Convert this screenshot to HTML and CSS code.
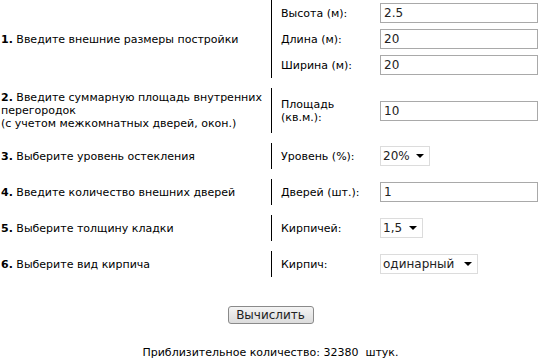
FILE: index.html
```html
<!DOCTYPE html>
<html>
	<head>
		<meta charset="utf-8">
		<title>Калькулятор кирпича</title>

		<link rel="stylesheet" href="styles.css">
	</head>
	<body>
		<form class="calc">
			<div class="step">
				<div class="step-title"><b>1.</b> Введите внешние размеры постройки</div>
				<div class="step-fields">
					<div class="field"><label>Высота (м):</label><input type="text" value="2.5"></div>
					<div class="field"><label>Длина (м):</label><input type="text" value="20"></div>
					<div class="field"><label>Ширина (м):</label><input type="text" value="20"></div>
				</div>
			</div>
			<div class="step">
				<div class="step-title"><b>2.</b> Введите суммарную площадь внутренних перегородок<br>(с учетом межкомнатных дверей, окон.)</div>
				<div class="step-fields">
					<div class="field"><label>Площадь (кв.м.):</label><input type="text" value="10"></div>
				</div>
			</div>
			<div class="step">
				<div class="step-title"><b>3.</b> Выберите уровень остекления</div>
				<div class="step-fields">
					<div class="field"><label>Уровень (%):</label>
						<span class="select"><select class="w-50"><option>20%</option></select></span>
					</div>
				</div>
			</div>
			<div class="step">
				<div class="step-title"><b>4.</b> Введите количество внешних дверей</div>
				<div class="step-fields">
					<div class="field"><label>Дверей (шт.):</label><input type="text" value="1"></div>
				</div>
			</div>
			<div class="step">
				<div class="step-title"><b>5.</b> Выберите толщину кладки</div>
				<div class="step-fields">
					<div class="field"><label>Кирпичей:</label>
						<span class="select"><select class="w-43"><option>1,5</option></select></span>
					</div>
				</div>
			</div>
			<div class="step">
				<div class="step-title"><b>6.</b> Выберите вид кирпича</div>
				<div class="step-fields">
					<div class="field"><label>Кирпич:</label>
						<span class="select"><select class="w-98"><option>одинарный</option></select></span>
					</div>
				</div>
			</div>

			<div class="actions">
				<button type="button">Вычислить</button>
			</div>
			<p class="result">Приблизительное количество: 32380&nbsp; штук.</p>
		</form>
	</body>
</html>
```

FILE: styles.css
```css
* {
	margin: 0;
	padding: 0;
	box-sizing: border-box;
}

body {
	font-family: "DejaVu Sans", Verdana, sans-serif;
	font-size: 11px;
	line-height: 13px;
	color: #000;
	background: #fff;
}

.calc {
	width: 540px;
	padding-left: 1px;
}

.step {
	display: grid;
	grid-template-columns: 270px 1fr;
	align-items: center;
	margin-bottom: 10px;
}

.step-title {
	padding: 3px 0;
}

.step-fields {
	border-left: 1px solid #000;
	padding-left: 9px;
	align-self: stretch;
	display: flex;
	flex-direction: column;
	justify-content: center;
}

.field {
	display: grid;
	grid-template-columns: 90px auto;
	column-gap: 9px;
	align-items: center;
	justify-content: start;
	padding: 3px 0;
}

.field input {
	width: 158px;
	height: 20px;
	border: 1px solid #a9a9a9;
	padding: 0 3px;
	font: inherit;
	font-size: 12px;
	color: #222;
	outline: none;
}

.select {
	position: relative;
	display: inline-block;
}

.select select {
	appearance: none;
	-webkit-appearance: none;
	height: 20px;
	border: 1px solid #dcdcdc;
	background: #fff;
	padding: 0 2px;
	font: inherit;
	font-size: 12px;
	color: #222;
}

.select::after {
	content: "";
	position: absolute;
	right: 6px;
	top: 8px;
	border-left: 4px solid transparent;
	border-right: 4px solid transparent;
	border-top: 4px solid #000;
	pointer-events: none;
}

.w-50 { width: 50px; }
.w-43 { width: 43px; }
.w-98 { width: 98px; }

.actions {
	text-align: center;
	padding-top: 19px;
}

.actions button {
	width: 86px;
	height: 18px;
	border: 1px solid #8a8a8a;
	border-radius: 3px;
	background: linear-gradient(#f4f4f4, #dcdcdc);
	font: inherit;
	font-size: 12px;
	color: #222;
}

.result {
	text-align: center;
	margin-top: 22px;
}
```
